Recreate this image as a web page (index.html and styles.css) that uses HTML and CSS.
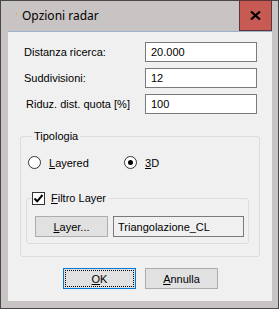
FILE: index.html
```html
<!DOCTYPE html>
<html>
<head>
<meta charset="utf-8">
<link rel="stylesheet" href="styles.css">
</head>
<body>
<div class="window">
  <div class="titlebar">
    <span class="app-dot"></span>
    <span class="title">Opzioni radar</span>
    <div class="close">
      <svg width="11" height="9" viewBox="0 0 11 9"><path d="M1 0.5 L10 8.5 M10 0.5 L1 8.5" stroke="#000" stroke-width="2.2"/></svg>
    </div>
  </div>
  <div class="client">
    <div class="rows">
      <div class="row"><span class="label">Distanza ricerca:</span><span class="textbox">20.000</span></div>
      <div class="row"><span class="label">Suddivisioni:</span><span class="textbox">12</span></div>
      <div class="row"><span class="label label-ind">Riduz. dist. quota [%]</span><span class="textbox">100</span></div>
    </div>
    <div class="group outer">
      <span class="group-title">Tipologia</span>
      <div class="radios">
        <div class="radio-item"><span class="radio"></span><span><u>L</u>ayered</span></div>
        <div class="radio-item r2"><span class="radio checked"><span class="dot"></span></span><span><u>3</u>D</span></div>
      </div>
      <div class="group inner">
        <div class="check-title">
          <span class="checkbox">
            <svg width="11" height="11" viewBox="0 0 11 11"><path d="M1.5 5.5 L4.2 8.3 L9.5 2" fill="none" stroke="#000" stroke-width="2"/></svg>
          </span>
          <span><u>F</u>iltro Layer</span>
        </div>
        <div class="layer-row">
          <span class="btn layer-btn"><u>L</u>ayer...</span>
          <span class="textbox readonly">Triangolazione_CL</span>
        </div>
      </div>
    </div>
    <div class="buttons">
      <span class="btn ok"><span class="focus"><u>O</u>K</span></span>
      <span class="btn"><u>A</u>nnulla</span>
    </div>
  </div>
</div>
</body>
</html>
```

FILE: styles.css
```css
html, body {
  margin: 0;
  padding: 0;
}
body {
  width: 279px;
  height: 309px;
  overflow: hidden;
  font-family: "Liberation Sans", Arial, sans-serif;
  font-size: 11px;
  color: #000;
}
.window {
  width: 279px;
  height: 309px;
  box-sizing: border-box;
  border: 1px solid #4a4848;
  background: #c9c4c4;
  display: flex;
  flex-direction: column;
}
.titlebar {
  height: 30px;
  display: flex;
  align-items: center;
  position: relative;
}
.app-dot {
  width: 1px;
  height: 2px;
  background: #e8b040;
  margin-left: 15px;
  margin-top: -4px;
}
.title {
  font-family: "Noto Sans", "Open Sans", sans-serif;
  font-size: 12px;
  margin-left: 5px;
  margin-top: -2px;
  color: #000;
}
.close {
  position: absolute;
  right: 6px;
  top: -1px;
  width: 33px;
  height: 31px;
  box-sizing: border-box;
  background: #c75a52;
  border: 1px solid #5e3434;
  display: flex;
  align-items: center;
  justify-content: center;
}
.client {
  margin: 0 6px 7px 7px;
  height: 270px;
  box-sizing: border-box;
  background: #f0f0f0;
  border-top: 1px solid #9fb2cc;
  position: relative;
}
.rows {
  padding: 10px 0 0 16px;
  display: flex;
  flex-direction: column;
  gap: 6px;
}
.row {
  display: flex;
  align-items: center;
  height: 20px;
}
.label {
  width: 121px;
}
.label-ind {
  padding-left: 2px;
  width: 119px;
}
.textbox {
  width: 112px;
  height: 20px;
  box-sizing: border-box;
  border: 1px solid #7a7a7a;
  background: #fff;
  padding-left: 5px;
  display: flex;
  align-items: center;
}
.textbox.readonly {
  background: #f0f0f0;
  width: 131px;
  height: 21px;
  padding-left: 4px;
}
.group {
  border: 1px solid #dcdcdc;
  border-radius: 3px;
  box-sizing: border-box;
  position: relative;
}
.outer {
  margin: 22px 0 0 12px;
  width: 240px;
  height: 121px;
}
.group-title {
  position: absolute;
  top: -7px;
  left: 11px;
  padding: 0 2px;
  background: #f0f0f0;
  line-height: 13px;
}
.radios {
  display: flex;
  margin-top: 19px;
  padding-left: 7px;
  height: 13px;
  align-items: center;
}
.radio-item {
  display: flex;
  align-items: center;
  gap: 8px;
  width: 96px;
}
.radio {
  width: 13px;
  height: 13px;
  box-sizing: border-box;
  border: 1px solid #333;
  border-radius: 50%;
  background: #fff;
  display: flex;
  align-items: center;
  justify-content: center;
}
.dot {
  width: 5px;
  height: 5px;
  border-radius: 50%;
  background: #000;
}
.inner {
  margin: 29px 0 0 5px;
  width: 223px;
  height: 46px;
}
.check-title {
  position: absolute;
  top: -7px;
  left: 5px;
  display: flex;
  align-items: center;
  gap: 6px;
  background: #f0f0f0;
  padding-right: 3px;
  line-height: 13px;
}
.checkbox {
  width: 13px;
  height: 13px;
  box-sizing: border-box;
  border: 1px solid #333;
  background: #fff;
  display: flex;
  align-items: center;
  justify-content: center;
}
.layer-row {
  display: flex;
  gap: 5px;
  padding: 17px 0 0 8px;
}
.btn {
  width: 73px;
  height: 21px;
  box-sizing: border-box;
  border: 1px solid #adadad;
  background: #e1e1e1;
  display: flex;
  align-items: center;
  justify-content: center;
}
.buttons {
  display: flex;
  gap: 9px;
  margin: 11px 0 0 55px;
}
.ok {
  border-color: #0078d7;
  padding: 1px;
}
.focus {
  width: 100%;
  height: 100%;
  box-sizing: border-box;
  border: 1px dotted #000;
  display: flex;
  align-items: center;
  justify-content: center;
}
```
